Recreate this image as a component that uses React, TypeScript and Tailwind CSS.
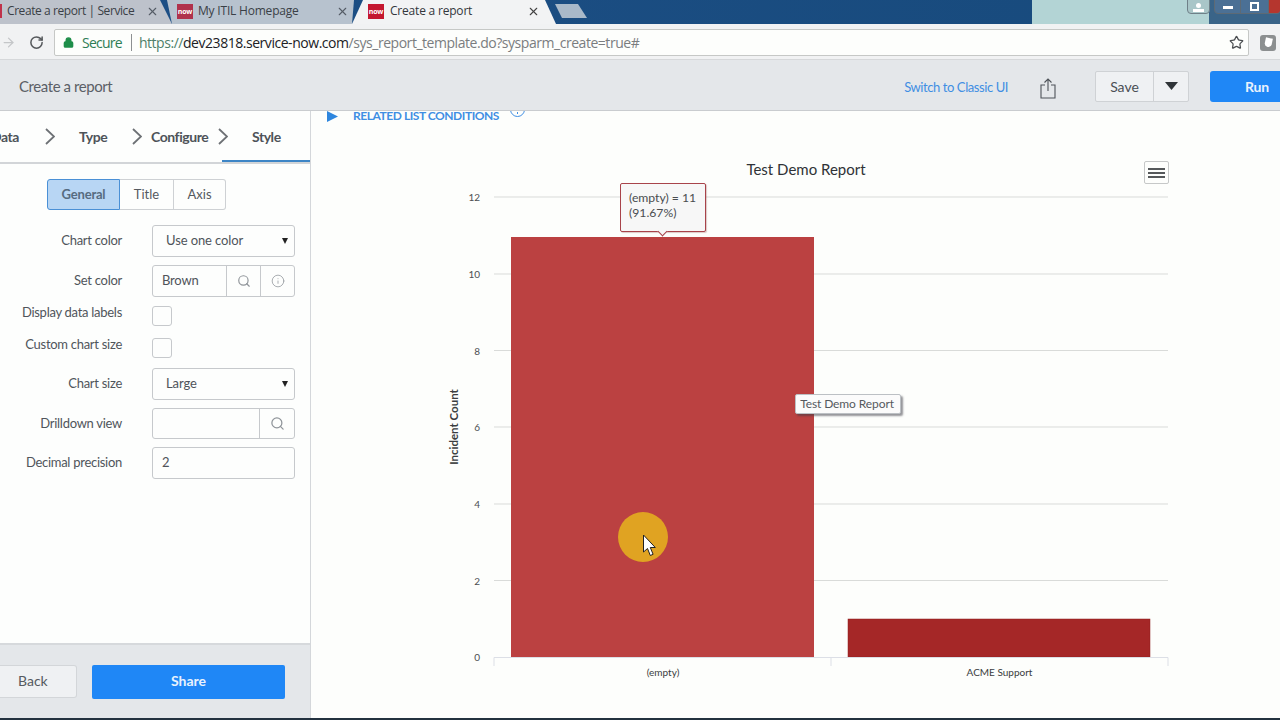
import React from "react";
import { ArrowRight, Info, Lock, RotateCw, Search, Star, X } from "lucide-react";

const ui = "font-['Lato','Noto_Sans',sans-serif]";

function Favicon({ muted }: { muted?: boolean }) {
  return (
    <span
      className={`flex w-[16px] h-[15px] items-center justify-center text-[7px] font-bold leading-none text-white shrink-0 ${
        muted ? "bg-[#b0324c]" : "bg-[#c4172f]"
      }`}
    >
      now
    </span>
  );
}

function TabStrip() {
  return (
    <div className="h-[24px] flex bg-gradient-to-r from-[#1d4f86] to-[#174a7c] overflow-hidden font-['Open_Sans',sans-serif] text-[12px] tracking-[-0.2px] text-[#3a3f46] shrink-0">
      <div className="w-[172px] -mr-[5px] shrink-0 flex items-center pb-[2px] bg-[#bdc2cb] [clip-path:polygon(0_0,160px_0,172px_100%,0_100%)]">
        <span className="w-[2px] h-[14px] bg-[#c0324a] shrink-0" />
        <span className="ml-[5px] whitespace-nowrap w-[138px] tracking-[-0.42px]">Create a report | Service</span>
        <X size={13} strokeWidth={2} className="text-[#555c66] ml-[1px]" />
      </div>
      <div className="w-[189px] -mr-[4px] shrink-0 flex items-center pb-[2px] pl-[10px] pr-[7px] bg-[#b7c2ce] [clip-path:polygon(0_0,187px_0,185px_100%,5px_100%)]">
        <Favicon muted />
        <span className="ml-[5px] flex-1 whitespace-nowrap">My ITIL Homepage</span>
        <X size={13} strokeWidth={2} className="text-[#555c66]" />
      </div>
      <div className="w-[204px] -mr-[1px] shrink-0 flex items-center pb-[2px] pl-[16px] pr-[16px] bg-[#f2f3f4] text-[#33373c] [clip-path:polygon(11px_0,193px_0,100%_100%,0_100%)]">
        <Favicon />
        <span className="ml-[6px] flex-1 whitespace-nowrap">Create a report</span>
        <X size={13} strokeWidth={2} className="text-[#444]" />
      </div>
      <div className="w-[32px] h-[14px] mt-[4px] shrink-0 bg-[#a9b9c9] [clip-path:polygon(0_0,23px_0,100%_100%,7px_100%)]" />
      <div className="flex-1" />
      <div className="w-[177px] bg-[#b3d4d5]" />
      <div className="relative w-[71px] bg-[#3a6488]">
        <div className="absolute left-[-22px] top-[-2px] w-[23px] h-[16px] rounded-b-[4px] border border-[#6f8088] bg-[#a9c6c8] flex flex-col items-center justify-end pb-[1px]">
          <span className="w-[5px] h-[5px] rounded-full bg-white" />
          <span className="w-[11px] h-[3px] bg-white mt-[1px]" />
        </div>
        <div className="absolute left-[5px] top-[-2px] w-[67px] h-[16px] rounded-b-[4px] border border-[#5d6a75] bg-[#4b7095] flex overflow-hidden">
          <span className="w-[26px] flex items-center justify-center border-r border-[#5d6a75]">
            <span className="w-[10px] h-[3px] mt-[3px] bg-white" />
          </span>
          <span className="w-[28px] flex items-center justify-center border-r border-[#5d6a75]">
            <span className="w-[9px] h-[9px] border-2 border-white" />
          </span>
          <span className="flex-1 bg-[#b5362e]" />
        </div>
      </div>
    </div>
  );
}

function AddressBar() {
  return (
    <div className="h-[36px] pt-[2px] bg-[#f1f2f3] border-b border-[#d6d8da] flex items-center font-['Open_Sans',sans-serif] shrink-0">
      <ArrowRight size={15} strokeWidth={2} className="text-[#c4c6c8] ml-[1px]" />
      <RotateCw size={15} strokeWidth={2.4} className="text-[#55585b] ml-[13px]" />
      <div className="ml-[10px] w-[1195px] h-[27px] bg-[#fdfefc] border border-[#c6c8c6] rounded-[2px] flex items-center pl-[8px] pr-[5px] text-[14px] tracking-[-0.46px]">
        <Lock size={11} strokeWidth={3} className="text-[#1e8e4a] fill-[#1e8e4a]" />
        <span className="ml-[8px] text-[#2e7d55] tracking-[-0.75px]">Secure</span>
        <span className="ml-[9px] w-px h-[17px] bg-[#8d9092]" />
        <span className="ml-[7px] whitespace-nowrap">
          <span className="text-[#4f7f6a]">https://</span>
          <span className="text-[#202124]">dev23818.service-now.com</span>
          <span className="text-[#7a7d80]">/sys_report_template.do?sysparm_create=true#</span>
        </span>
        <Star size={15} strokeWidth={2} className="ml-auto mr-[-1px] text-[#4b4e51]" />
      </div>
      <div className="ml-[11px] w-[16px] h-[16px] rounded-[3px] bg-[#8c8f90] flex items-center justify-center">
        <span className="w-[7px] h-[9px] rounded-b-full rotate-12 bg-white" />
      </div>
    </div>
  );
}

function Header() {
  return (
    <div className="h-[51px] bg-[#e4e7ea] border-b border-[#c9cccf] flex items-center pl-[19px] text-[#5b6066] shrink-0">
      <span className="text-[15px] mt-[2px] tracking-[-0.42px]">Create a report</span>
      <span className="ml-auto mt-[6px] text-[13px] text-[#3f8ee3] tracking-[-0.42px] mr-[32px] whitespace-nowrap">Switch to Classic UI</span>
      <svg width="16" height="21" viewBox="0 0 16 21" className="mr-[39px] mt-[6px] shrink-0" fill="none" stroke="#4d5258" strokeWidth="1.100">
        <path d="M5 7H1v13h14V7h-4M8 13V1M4.500 4.500L8 1l3.500 3.500" />
      </svg>
      <div className="w-[94px] h-[31px] mt-[2px] flex border border-[#cfd2d5] rounded-[2px] bg-[#eff1f3] mr-[21px]">
        <span className="w-[58px] flex items-center justify-center text-[14px] text-[#4a4f55] border-r border-[#cfd2d5]">Save</span>
        <span className="flex-1 flex items-center justify-center">
          <svg width="13" height="8" viewBox="0 0 13 8"><path d="M0 0h13L6.500 8z" fill="#2f3438" /></svg>
        </span>
      </div>
      <div className="w-[70px] h-[31px] mt-[2px] rounded-l-[3px] bg-[#1f87f6] flex items-center pl-[35px] text-[14px] font-bold tracking-[-0.2px] text-[#e8f2fd] shrink-0">
        Run
      </div>
    </div>
  );
}

function Chevron() {
  return (
    <svg width="10" height="17" viewBox="0 0 10 17" className="shrink-0">
      <path d="M1 1l8 7.500-8 7.500" fill="none" stroke="#6d7175" strokeWidth="1.800" />
    </svg>
  );
}

function Wizard() {
  return (
    <div className="relative h-[53px] border-b-2 border-[#d2d5d8] flex items-center text-[14px] font-bold tracking-[-0.45px] text-[#4e5359] shrink-0 overflow-hidden">
      <span className="absolute left-[-9px]">Data</span>
      <span className="ml-[45px]"><Chevron /></span>
      <span className="ml-[24px] w-[28px]">Type</span>
      <span className="ml-[25px]"><Chevron /></span>
      <span className="ml-[9px] w-[57px] whitespace-nowrap">Configure</span>
      <span className="ml-[10px]"><Chevron /></span>
      <span className="ml-[24px]">Style</span>
      <span className="absolute left-[222px] right-0 bottom-0 h-[2px] bg-[#3d85c6]" />
    </div>
  );
}

const labelText = "w-[122px] text-right text-[13px] text-[#50555b] whitespace-nowrap tracking-[-0.28px]";

function Row({ label, children, className }: { label: string; children: React.ReactNode; className: string }) {
  return (
    <div className={`flex items-center ${className}`}>
      <span className={labelText}>{label}</span>
      <div className="ml-[30px]">{children}</div>
    </div>
  );
}

function SelectBox({ value }: { value: string }) {
  return (
    <div className="w-[143px] h-[32px] rounded-[3px] border border-[#c6c9cc] flex items-center pl-[13px] pr-[6px] text-[13px] tracking-[-0.1px] text-[#4f545a]">
      <span>{value}</span>
      <svg width="6" height="6" viewBox="0 0 6 6" className="ml-auto mb-[1px]"><path d="M0 0h6L3 6z" fill="#222" /></svg>
    </div>
  );
}

function Side() {
  return (
    <aside className="w-[311px] shrink-0 border-r border-[#d4d7da] flex flex-col bg-[#fdfefd]">
      <Wizard />
      <div className="mt-[15px] ml-[47px] flex h-[31px] w-[179px] text-[13px] text-[#55595f]">
        <span className="w-[73px] flex items-center justify-center bg-[#b8d6f4] border border-[#4a90d6] rounded-l-[3px] font-bold tracking-[-0.2px] text-[#566b80]">General</span>
        <span className="w-[54px] flex items-center justify-center border-y border-r border-[#ced1d4]">Title</span>
        <span className="flex-1 flex items-center justify-center border-y border-r border-[#ced1d4] rounded-r-[3px]">Axis</span>
      </div>
      <Row label="Chart color" className="mt-[15px] h-[32px]"><SelectBox value="Use one color" /></Row>
      <Row label="Set color" className="mt-[8px] h-[32px]">
        <div className="w-[143px] h-[32px] rounded-[3px] border border-[#c6c9cc] flex items-center text-[13px] text-[#4f545a]">
          <span className="w-[73px] pl-[9px] tracking-[-0.2px]">Brown</span>
          <span className="w-[34px] h-full flex items-center justify-center border-l border-[#c6c9cc]"><Search size={14} className="text-[#8f9499]" /></span>
          <span className="flex-1 h-full flex items-center justify-center border-l border-[#c6c9cc]"><Info size={14} strokeWidth={1.300} className="text-[#8f9499]" /></span>
        </div>
      </Row>
      <div className="mt-[9px] flex items-start h-[22px]">
        <span className={`${labelText} -mt-[3px]`}>Display data labels</span>
        <span className="ml-[30px] w-[20px] h-[20px] rounded-[3px] border border-[#c6c9cc]" />
      </div>
      <div className="mt-[10px] flex items-start h-[22px]">
        <span className={`${labelText} -mt-[3px]`}>Custom chart size</span>
        <span className="ml-[30px] w-[20px] h-[20px] rounded-[3px] border border-[#c6c9cc]" />
      </div>
      <Row label="Chart size" className="mt-[8px] h-[32px]"><SelectBox value="Large" /></Row>
      <Row label="Drilldown view" className="mt-[8px] h-[31px]">
        <div className="w-[143px] h-[31px] rounded-[3px] border border-[#c6c9cc] flex justify-end">
          <span className="w-[35px] h-full flex items-center justify-center border-l border-[#c6c9cc]"><Search size={15} className="text-[#8f9499]" /></span>
        </div>
      </Row>
      <Row label="Decimal precision" className="mt-[8px] h-[32px]">
        <div className="w-[143px] h-[32px] rounded-[3px] border border-[#c6c9cc] flex items-center pl-[9px] text-[13px] text-[#4f545a]">2</div>
      </Row>
      <div className="mt-auto h-[75px] bg-[#e4e7ea] border-t-2 border-[#d6d9dc] flex items-center">
        <span className="w-[77px] h-[33px] rounded-r-[3px] border border-l-0 border-[#d3d6d9] bg-[#eff1f3] flex items-center pl-[18px] pb-[2px] text-[14px] text-[#555a60]">Back</span>
        <span className="ml-[15px] w-[193px] h-[34px] rounded-[2px] bg-[#1f87f6] flex items-center justify-center pb-[2px] text-[14px] font-bold text-[#e8f2fd]">Share</span>
      </div>
    </aside>
  );
}

const grid = [
  { v: "12", y: 197 },
  { v: "10", y: 274 },
  { v: "8", y: 350.5 },
  { v: "6", y: 427 },
  { v: "4", y: 504 },
  { v: "2", y: 580.5 },
];

function Chart() {
  return (
    <svg viewBox="311 131 969 587" className="w-[969px] h-[587px] block" fontFamily="Lato, 'Noto Sans', sans-serif">
      {grid.map((g) => (
        <g key={g.v}>
          <line x1="494" x2="1168" y1={g.y} y2={g.y} stroke="#d9dbd9" strokeWidth="1" />
          <text x="480" y={g.y + 4} textAnchor="end" fontSize="10" fill="#4c4f52">{g.v}</text>
        </g>
      ))}
      <text x="480" y="661" textAnchor="end" fontSize="10" fill="#4c4f52">0</text>
      <text x="806" y="175" textAnchor="middle" fontSize="15" fill="#2f3236">Test Demo Report</text>
      <text transform="translate(458 427) rotate(-90)" textAnchor="middle" fontSize="11.500" fontWeight="700" fill="#3a3d40">Incident Count</text>
      <rect x="511" y="237" width="303" height="420" fill="#bb4141" />
      <rect x="848" y="619" width="302" height="38" fill="#a52727" stroke="#8f1f1f" strokeWidth="0.500" />
      <path d="M494 666V657.500H1168V666M831 657.500V666" fill="none" stroke="#dcdfe6" strokeWidth="1" />
      <text x="663" y="675.500" textAnchor="middle" fontSize="10" fill="#3a3d40">(empty)</text>
      <text x="999.500" y="675.500" textAnchor="middle" fontSize="10" fill="#3a3d40">ACME Support</text>
      <circle cx="643" cy="537" r="25" fill="#e0a322" />
      <path d="M643.500 535v17l4-3.500 2.800 7 2.800-1.200-2.800-6.800h5z" fill="#fff" stroke="#222" strokeWidth="1" />
    </svg>
  );
}

function Main() {
  return (
    <main className="relative flex-1 bg-[#fdfefc] overflow-hidden">
      <div className="h-[20px] flex items-start pl-[16px] overflow-hidden">
        <svg width="12" height="11" viewBox="0 0 12 11" className="shrink-0"><path d="M0 0l11 5.500L0 11z" fill="#2e86de" /></svg>
        <span className="ml-[14px] text-[12px] leading-[10px] font-bold text-[#3f8ee3] tracking-[-0.45px] whitespace-nowrap">RELATED LIST CONDITIONS</span>
        <span className="relative ml-[11px] -mt-[9px] w-[15px] h-[15px] rounded-full border border-[#3f8ee3] shrink-0">
          <span className="absolute left-[6px] top-[9px] w-[1px] h-[2px] bg-[#3f8ee3]" />
        </span>
      </div>
      <Chart />
      <div className="absolute left-[833px] top-[50px] w-[25px] h-[23px] rounded-[2px] border border-[#c6c8c8] flex flex-col items-center justify-center gap-[2px]">
        <span className="w-[17px] h-[2px] bg-[#55585a]" />
        <span className="w-[17px] h-[2px] bg-[#55585a]" />
        <span className="w-[17px] h-[2px] bg-[#55585a]" />
      </div>
      <div className="absolute left-[309px] top-[72px] w-[86px] h-[49px] bg-[#f7f7f7] border border-[#a8434a] rounded-[2px] pl-[8px] pt-[6px] text-[12.200px] leading-[15px] text-[#4a4d50] shadow-[1px_1px_1px_rgba(120,40,40,0.25)]">
        <div>(empty) = 11</div>
        <div>(91.67%)</div>
        <span className="absolute left-[38px] bottom-[-4px] w-[7px] h-[7px] rotate-45 bg-[#f7f7f7] border-r border-b border-[#a8434a]" />
      </div>
      <div className="absolute left-[484px] top-[283px] w-[106px] h-[20px] rounded-[2px] bg-[#fbfbfb] border border-[#bcc0c4] flex items-center justify-center pr-[2px] text-[12px] tracking-[-0.1px] text-[#55595e] shadow-[2px_2px_2px_rgba(60,60,70,0.55)]">
        Test Demo Report
      </div>
    </main>
  );
}

export default function App() {
  return (
    <div className={`w-[1280px] h-[720px] overflow-hidden flex flex-col bg-white ${ui}`}>
      <TabStrip />
      <AddressBar />
      <Header />
      <div className="flex flex-1 min-h-0">
        <Side />
        <Main />
      </div>
      <div className="h-[2px] bg-[#23323f] shrink-0" />
    </div>
  );
}
